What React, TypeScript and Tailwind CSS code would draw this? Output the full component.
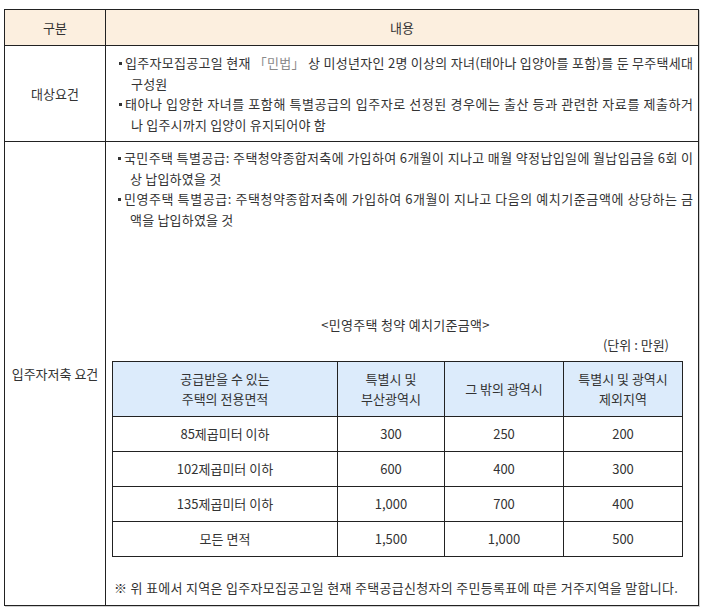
import React, { useLayoutEffect, useRef, useState } from "react";

function JLine({ children, text }: { children?: React.ReactNode; text: string }) {
  const outer = useRef<HTMLDivElement>(null);
  const inner = useRef<HTMLSpanElement>(null);
  const [ls, setLs] = useState(0);
  useLayoutEffect(() => {
    const measure = () => {
      if (!outer.current || !inner.current) return;
      const prev = inner.current.style.letterSpacing;
      inner.current.style.letterSpacing = "0px";
      const avail = outer.current.clientWidth;
      const nat = inner.current.getBoundingClientRect().width;
      inner.current.style.letterSpacing = prev;
      const n = Array.from(text).length;
      setLs((avail - nat) / (n - 1));
    };
    measure();
    if (document.fonts && document.fonts.ready) document.fonts.ready.then(measure);
  }, [text]);
  return (
    <div ref={outer} className="flex-1 overflow-visible whitespace-nowrap">
      <span ref={inner} style={{ letterSpacing: `${ls}px` }}>
        {children ?? text}
      </span>
    </div>
  );
}

function BulletItem({ first, firstNode, rest }: { first: string; firstNode?: React.ReactNode; rest: string }) {
  return (
    <div>
      <div className="flex">
        <span className="mt-[9px] mr-[3px] h-[3px] w-[3px] shrink-0 self-start bg-[#333]" />
        <JLine text={first}>{firstNode}</JLine>
      </div>
      <div className="pl-[12px] tracking-[0.2px]">{rest}</div>
    </div>
  );
}

const rows = [
  ["85제곱미터 이하", "300", "250", "200"],
  ["102제곱미터 이하", "600", "400", "300"],
  ["135제곱미터 이하", "1,000", "700", "400"],
  ["모든 면적", "1,500", "1,000", "500"],
];

export default function App() {
  return (
    <div className="h-[611px] w-[704px] bg-white pl-[4px] pt-[9px] font-['Noto_Sans_CJK_KR','Noto_Sans',sans-serif] text-[13px] text-[#333]">
      <table className="w-[694px] table-fixed border-collapse shadow-[1px_1px_0_#d0d0d0]">
        <colgroup>
          <col className="w-[101px]" />
          <col className="w-[593px]" />
        </colgroup>
        <tbody>
          <tr className="h-[36px] bg-[#fcefdf]">
            <td className="border border-[#222] text-center">구분</td>
            <td className="border border-[#222] text-center">내용</td>
          </tr>
          <tr className="h-[96px]">
            <td className="border border-[#222] text-center">대상요건</td>
            <td className="border border-[#222] pb-[6px] pl-[13px] pr-[5px] pt-[7px] align-top leading-[20.5px]">
              <BulletItem
                first="입주자모집공고일 현재 「민법」 상 미성년자인 2명 이상의 자녀(태아나 입양아를 포함)를 둔 무주택세대"
                firstNode={
                  <>
                    입주자모집공고일 현재 <span className="text-[#8a8a8a]">「민법」</span> 상 미성년자인 2명 이상의 자녀(태아나 입양아를 포함)를 둔 무주택세대
                  </>
                }
                rest="구성원"
              />
              <BulletItem
                first="태아나 입양한 자녀를 포함해 특별공급의 입주자로 선정된 경우에는 출산 등과 관련한 자료를 제출하거"
                rest="나 입주시까지 입양이 유지되어야 함"
              />
            </td>
          </tr>
          <tr className="h-[464px]">
            <td className="border border-[#222] text-center">입주자저축 요건</td>
            <td className="border border-[#222] pl-[12px] pr-[5px] pt-[6px] align-top leading-[20.5px]">
              <BulletItem
                first="국민주택 특별공급: 주택청약종합저축에 가입하여 6개월이 지나고 매월 약정납입일에 월납입금을 6회 이"
                rest="상 납입하였을 것"
              />
              <BulletItem
                first="민영주택 특별공급: 주택청약종합저축에 가입하여 6개월이 지나고 다음의 예치기준금액에 상당하는 금"
                rest="액을 납입하였을 것"
              />
              <div className="mt-[85px] text-center leading-[20px] tracking-[0.3px]">&lt;민영주택 청약 예치기준금액&gt;</div>
              <div className="pr-[24px] text-right leading-[20px]">(단위 : 만원)</div>
              <table className="ml-[-6px] mt-[6px] w-[570px] table-fixed border-collapse text-center leading-[20px]">
                <colgroup>
                  <col className="w-[225px]" />
                  <col className="w-[107px]" />
                  <col className="w-[119px]" />
                  <col className="w-[119px]" />
                </colgroup>
                <tbody>
                  <tr className="h-[55px] bg-[#dcebfb]">
                    <td className="border border-[#222]">
                      공급받을 수 있는
                      <br />
                      주택의 전용면적
                    </td>
                    <td className="border border-[#222]">
                      특별시 및
                      <br />
                      부산광역시
                    </td>
                    <td className="border border-[#222]">그 밖의 광역시</td>
                    <td className="border border-[#222]">
                      특별시 및 광역시
                      <br />
                      제외지역
                    </td>
                  </tr>
                  {rows.map((r) => (
                    <tr key={r[0]} className="h-[35px]">
                      {r.map((c, i) => (
                        <td key={i} className="border border-[#222]">
                          {c}
                        </td>
                      ))}
                    </tr>
                  ))}
                </tbody>
              </table>
              <div className="ml-[-4px] mt-[21px] leading-[20px] tracking-[0.3px]">
                ※ 위 표에서 지역은 입주자모집공고일 현재 주택공급신청자의 주민등록표에 따른 거주지역을 말합니다.
              </div>
            </td>
          </tr>
        </tbody>
      </table>
    </div>
  );
}
